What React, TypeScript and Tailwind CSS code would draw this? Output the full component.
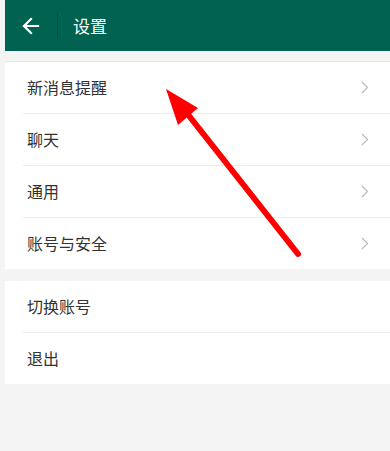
const mainItems = ['新消息提醒', '聊天', '通用', '账号与安全'];
const accountItems = ['切换账号', '退出'];

const font = { fontFamily: '"Noto Sans CJK SC", "Liberation Sans", sans-serif' };

function Chevron() {
  return (
    <svg width="8" height="13" viewBox="0 0 8 13" fill="none" stroke="#b8b8b8" strokeWidth="1.2">
      <path d="M1 1l5.5 5.5L1 12" />
    </svg>
  );
}

function Row({ label, last, arrow }: { label: string; last: boolean; arrow: boolean }) {
  return (
    <div className="pl-[18px]">
      <div
        className={`flex items-center justify-between pr-[21px] ${last ? 'h-[51px]' : 'h-[52px] border-b border-[#ececec]'}`}
      >
        <span className="pl-[4px] pb-px text-[16px] text-[#333333]">{label}</span>
        {arrow && <Chevron />}
      </div>
    </div>
  );
}

export default function App() {
  return (
    <div className="relative w-[390px] h-[451px] bg-[#f4f4f5] pl-[5px] overflow-hidden" style={font}>
      <div className="h-[51px] bg-[#006352] flex items-center">
        <div className="w-[52px] flex items-center justify-center">
          <svg width="18" height="18" viewBox="0 0 18 18" fill="none" stroke="white" strokeWidth="2.2" strokeLinecap="square">
            <path d="M2 9h14M9 2L2 9l7 7" />
          </svg>
        </div>
        <div className="w-px h-[26px] bg-[#004d40]" />
        <span className="ml-[15px] text-[17px] text-white">设置</span>
      </div>

      <div className="mt-[10px] bg-white border-t border-[#e6e6e6]">
        {mainItems.map((item, i) => (
          <Row key={item} label={item} last={i === mainItems.length - 1} arrow />
        ))}
      </div>

      <div className="mt-[12px] bg-white">
        {accountItems.map((item, i) => (
          <Row key={item} label={item} last={i === accountItems.length - 1} arrow={false} />
        ))}
      </div>

      <svg className="absolute left-0 top-0 pointer-events-none" width="390" height="451">
        <line x1="298" y1="254" x2="186" y2="112" stroke="#ff0000" strokeWidth="6" strokeLinecap="round" />
        <polygon points="166,89 198,108 178,125" fill="#ff0000" />
      </svg>
    </div>
  );
}
